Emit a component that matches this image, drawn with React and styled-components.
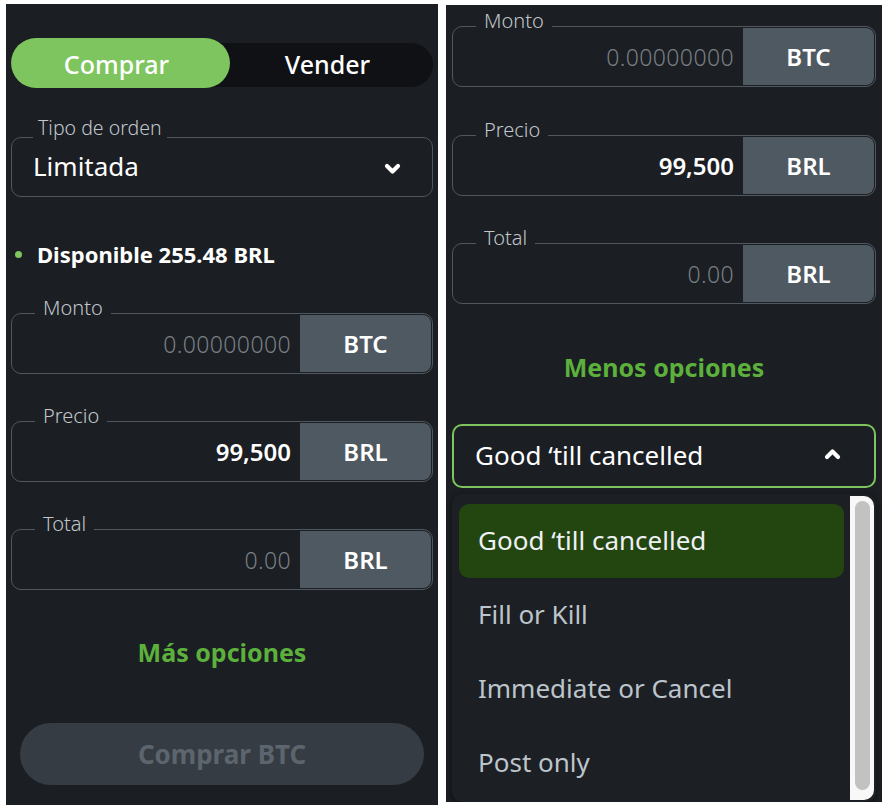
import React from 'react';
import styled, { createGlobalStyle } from 'styled-components';

const colors = {
  page: '#ffffff',
  panel: '#1b1e22',
  track: '#0f1114',
  green: '#7ec45f',
  link: '#5cb03c',
  label: '#c0c6cc',
  border: '#50575f',
  unit: '#4f5962',
  muted: '#777e85',
  text: '#ffffff',
  option: '#bcc4cc',
  selected: '#234510',
  btn: '#363c43',
  btnText: '#5c656d',
};

const Global = createGlobalStyle`
  html, body { margin: 0; padding: 0; background: ${colors.page}; }
  body { font-family: "Noto Sans", "Open Sans", sans-serif; }
  * { box-sizing: border-box; }
`;

const Page = styled.div`
  display: flex;
  align-items: flex-start;
  gap: 8px;
  padding: 4px 0 0 6px;
  width: 892px;
  height: 810px;
  overflow: hidden;
`;

const Panel = styled.div`
  background: ${colors.panel};
  width: ${p => p.w}px;
  height: ${p => p.h}px;
  margin-top: ${p => p.top || 0}px;
  padding: ${p => p.pad};
  display: flex;
  flex-direction: column;
  overflow: hidden;
`;

const Toggle = styled.div`
  display: grid;
  grid-template-columns: 1fr 1fr;
  height: 44px;
  margin: 39px 0 0;
  background: ${colors.track};
  border-radius: 22px;
`;

const Tab = styled.div`
  position: relative;
  display: flex;
  align-items: center;
  justify-content: center;
  padding-bottom: 2px;
  font-size: 25px;
  font-weight: 500;
  color: #fff;
  z-index: 0;
  &::before {
    content: '';
    display: ${p => (p.active ? 'block' : 'none')};
    position: absolute;
    left: 0;
    right: -8px;
    top: -5px;
    bottom: -1px;
    background: ${colors.green};
    border-radius: 25px;
    z-index: -1;
  }
`;

const Box = styled.div`
  position: relative;
  display: flex;
  align-items: stretch;
  height: ${p => p.h || 61}px;
  margin-top: ${p => p.mt}px;
  border: ${p => (p.focus ? `2px solid ${colors.green}` : `1.5px solid ${colors.border}`)};
  border-radius: 10px;
`;

const Legend = styled.span`
  position: absolute;
  left: ${p => p.left}px;
  top: ${p => p.top}px;
  padding: 0 ${p => p.pad}px;
  background: ${colors.panel};
  font-size: ${p => p.size || 20}px;
  line-height: 20px;
  font-weight: 300;
  color: ${colors.label};
`;

const SelectText = styled.div`
  flex: 1;
  display: flex;
  align-items: center;
  justify-content: space-between;
  padding: 0 ${p => p.pr}px 3px ${p => p.pl}px;
  font-size: 26px;
  color: #fff;
`;

const Value = styled.div`
  flex: 1;
  display: flex;
  align-items: center;
  justify-content: flex-end;
  padding-right: 9px;
  font-size: ${p => (p.muted ? 23 : 24)}px;
  font-weight: ${p => (p.muted ? 300 : 600)};
  letter-spacing: ${p => (p.muted ? 0.4 : 0)}px;
  color: ${p => (p.muted ? colors.muted : colors.text)};
`;

const Unit = styled.div`
  width: 131px;
  margin: 1px 1px 1px 0;
  display: flex;
  align-items: center;
  justify-content: center;
  background: ${colors.unit};
  border-radius: 0 8px 8px 0;
  font-size: 24px;
  font-weight: 600;
  color: #fff;
`;

const Available = styled.div`
  display: flex;
  align-items: center;
  gap: 15px;
  height: 24px;
  margin-top: 45px;
  padding-left: 4px;
  font-size: 22px;
  font-weight: 700;
  color: #fff;
`;

const Dot = styled.span`
  width: 7px;
  height: 7px;
  border-radius: 50%;
  background: ${colors.green};
`;

const MoreLink = styled.div`
  margin-top: ${p => p.mt}px;
  height: 30px;
  line-height: 30px;
  text-align: center;
  font-size: 25px;
  font-weight: 700;
  color: ${colors.link};
`;

const SubmitButton = styled.div`
  margin: 56px 9px 0;
  height: 62px;
  border-radius: 31px;
  background: ${colors.btn};
  display: flex;
  align-items: center;
  justify-content: center;
  font-size: 26px;
  font-weight: 700;
  color: ${colors.btnText};
`;

const Menu = styled.div`
  display: flex;
  margin-top: 6px;
  flex: 1;
  background: #1c1f23;
  border-radius: 10px;
  box-shadow: 0 2px 6px rgba(0, 0, 0, 0.5);
`;

const OptionList = styled.div`
  flex: 1;
  padding: 10px 6px 0 7px;
`;

const Option = styled.div`
  height: 74px;
  display: flex;
  align-items: center;
  padding: 0 0 2px 19px;
  border-radius: 10px;
  font-size: 26px;
  color: ${p => (p.selected ? '#eef1f3' : colors.option)};
  background: ${p => (p.selected ? colors.selected : 'transparent')};
`;

const ScrollTrack = styled.div`
  width: 24px;
  margin: 2px 2px 2px 0;
  padding: 5px 4px 10px 5px;
  background: #f8f8f8;
  border-radius: 0 10px 10px 0;
  display: flex;
`;

const ScrollThumb = styled.div`
  flex: 1;
  background: #c2c2c2;
  border-radius: 8px;
`;

const ChevronSvg = styled.svg`
  margin-top: ${p => (p.$up ? 0 : 5)}px;
`;

const Chevron = ({ up }) => (
  <ChevronSvg $up={up} width="19" height="13" viewBox="0 0 19 13">
    <path
      d={up ? 'M4 9 L9.5 3.5 L15 9' : 'M4 4 L9.5 9.5 L15 4'}
      fill="none"
      stroke="#fff"
      strokeWidth="4.2"
      strokeLinecap="round"
      strokeLinejoin="round"
    />
  </ChevronSvg>
);

const Field = ({ label, value, unit, muted, mt }) => (
  <Box mt={mt}>
    <Legend left={23} top={-16} pad={8}>{label}</Legend>
    <Value muted={muted}>{value}</Value>
    <Unit>{unit}</Unit>
  </Box>
);

const OPTIONS = ['Good ‘till cancelled', 'Fill or Kill', 'Immediate or Cancel', 'Post only'];

export default function App() {
  return (
    <Page>
      <Global />
      <Panel w={432} h={801} pad="0 5px">
        <Toggle>
          <Tab active>Comprar</Tab>
          <Tab>Vender</Tab>
        </Toggle>
        <Box mt={50} h={60}>
          <Legend left={21} top={-20} pad={5} size={19.5}>Tipo de orden</Legend>
          <SelectText pl={21} pr={30}>
            Limitada
            <Chevron />
          </SelectText>
        </Box>
        <Available>
          <Dot />
          Disponible 255.48 BRL
        </Available>
        <Field label="Monto" value="0.00000000" unit="BTC" muted mt={47} />
        <Field label="Precio" value="99,500" unit="BRL" mt={47} />
        <Field label="Total" value="0.00" unit="BRL" muted mt={47} />
        <MoreLink mt={47}>Más opciones</MoreLink>
        <SubmitButton>Comprar BTC</SubmitButton>
      </Panel>
      <Panel w={436} h={797} top={1} pad="0 6px 0 6px">
        <Field label="Monto" value="0.00000000" unit="BTC" muted mt={21} />
        <Field label="Precio" value="99,500" unit="BRL" mt={48} />
        <Field label="Total" value="0.00" unit="BRL" muted mt={47} />
        <MoreLink mt={48}>Menos opciones</MoreLink>
        <Box mt={42} h={64} focus>
          <SelectText pl={21} pr={32}>
            Good ‘till cancelled
            <Chevron up />
          </SelectText>
        </Box>
        <Menu>
          <OptionList>
            {OPTIONS.map((o, i) => (
              <Option key={o} selected={i === 0}>{o}</Option>
            ))}
          </OptionList>
          <ScrollTrack>
            <ScrollThumb />
          </ScrollTrack>
        </Menu>
      </Panel>
    </Page>
  );
}
